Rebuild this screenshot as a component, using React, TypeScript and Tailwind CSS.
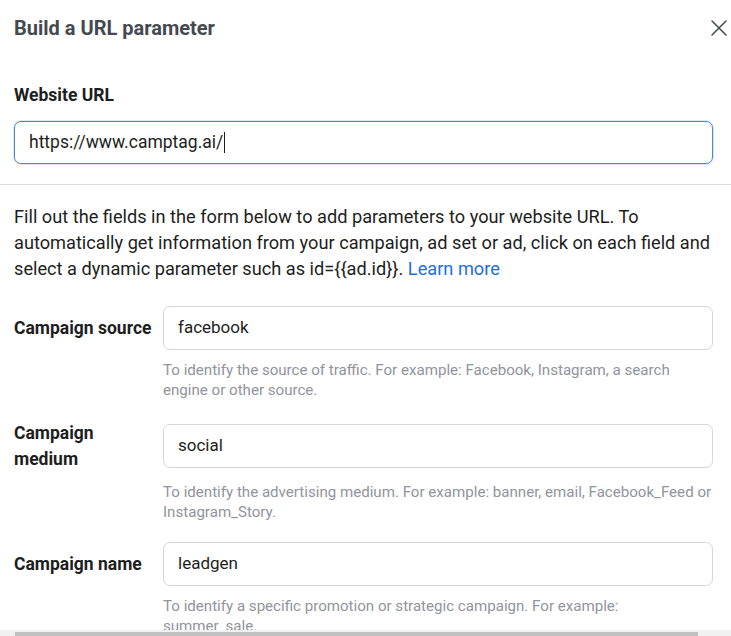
import React from 'react'

const font = { fontFamily: 'Roboto, "Liberation Sans", sans-serif' }

interface FieldProps {
  label: React.ReactNode
  value: string
  help: React.ReactNode
}

const Field: React.FC<FieldProps> = ({ label, value, help }) => {
  return (
    <div className="mb-[20px]">
      <div className="flex items-center">
        <div className="w-[149px] shrink-0 text-[17.5px] font-bold leading-[26px] text-[#1c1e21]">{label}</div>
        <div className="flex h-[44px] flex-1 items-center rounded-[7px] border border-[#d4d7dc] bg-white px-[14px] text-[17px] text-[#1c1e21]">
          {value}
        </div>
      </div>
      <p className="ml-[149px] mt-[10px] text-[15.1px] leading-[20px] text-[#90949c]">{help}</p>
    </div>
  )
}

export default function App() {
  return (
    <div className="flex h-[636px] w-[731px] flex-col overflow-hidden bg-white" style={font}>
      <div className="flex-1 overflow-hidden">
        <div className="flex h-[56px] items-center justify-between pl-[14px]">
          <h2 className="text-[20px] font-bold text-[#444950]">Build a URL parameter</h2>
          <button className="flex h-[24px] w-[24px] items-center justify-center text-[#444950]">
            <svg width="16" height="16" viewBox="0 0 16 16" fill="none" stroke="currentColor" strokeWidth="1.5" strokeLinecap="round">
              <path d="M1 1L15 15M15 1L1 15" />
            </svg>
          </button>
        </div>

        <div className="border-b border-[#dadde1] pb-[20px] pl-[14px] pr-[18px] pt-[28px]">
          <div className="text-[17.5px] font-bold leading-[22px] text-[#1c1e21]">Website URL</div>
          <div className="mt-[15px] flex h-[43px] items-center rounded-[7px] border border-[#4a86d8] px-[14px] text-[17.5px] text-[#1c1e21] shadow-[0_0_0_1px_#dce8f8]">
            https://www.camptag.ai/
            <span className="ml-[1px] inline-block h-[21px] w-[1px] bg-[#1c1e21]" />
          </div>
        </div>

        <div className="pl-[14px] pr-[18px] pt-[19px]">
          <p className="text-[18.2px] leading-[26px] text-[#1c1e21]">
            Fill out the fields in the form below to add parameters to your website URL. To automatically get
            information from your campaign, ad set or ad, click on each field and select a dynamic parameter such
            as id={'{{ad.id}}'}. <span className="text-[#216fdb]">Learn more</span>
          </p>

          <div className="mt-[24px]">
            <Field
              label="Campaign source"
              value="facebook"
              help="To identify the source of traffic. For example: Facebook, Instagram, a search engine or other source."
            />
            <Field
              label={
                <>
                  Campaign
                  <br />
                  medium
                </>
              }
              value="social"
              help="To identify the advertising medium. For example: banner, email, Facebook_Feed or Instagram_Story."
            />
            <Field
              label="Campaign name"
              value="leadgen"
              help="To identify a specific promotion or strategic campaign. For example: summer_sale."
            />
          </div>
        </div>
      </div>

      <div className="flex h-[6px] shrink-0 items-end bg-[#f1f1f1] px-[15px]">
        <div className="h-[4px] w-[683px] bg-[#c1c1c1]" />
      </div>
    </div>
  )
}
